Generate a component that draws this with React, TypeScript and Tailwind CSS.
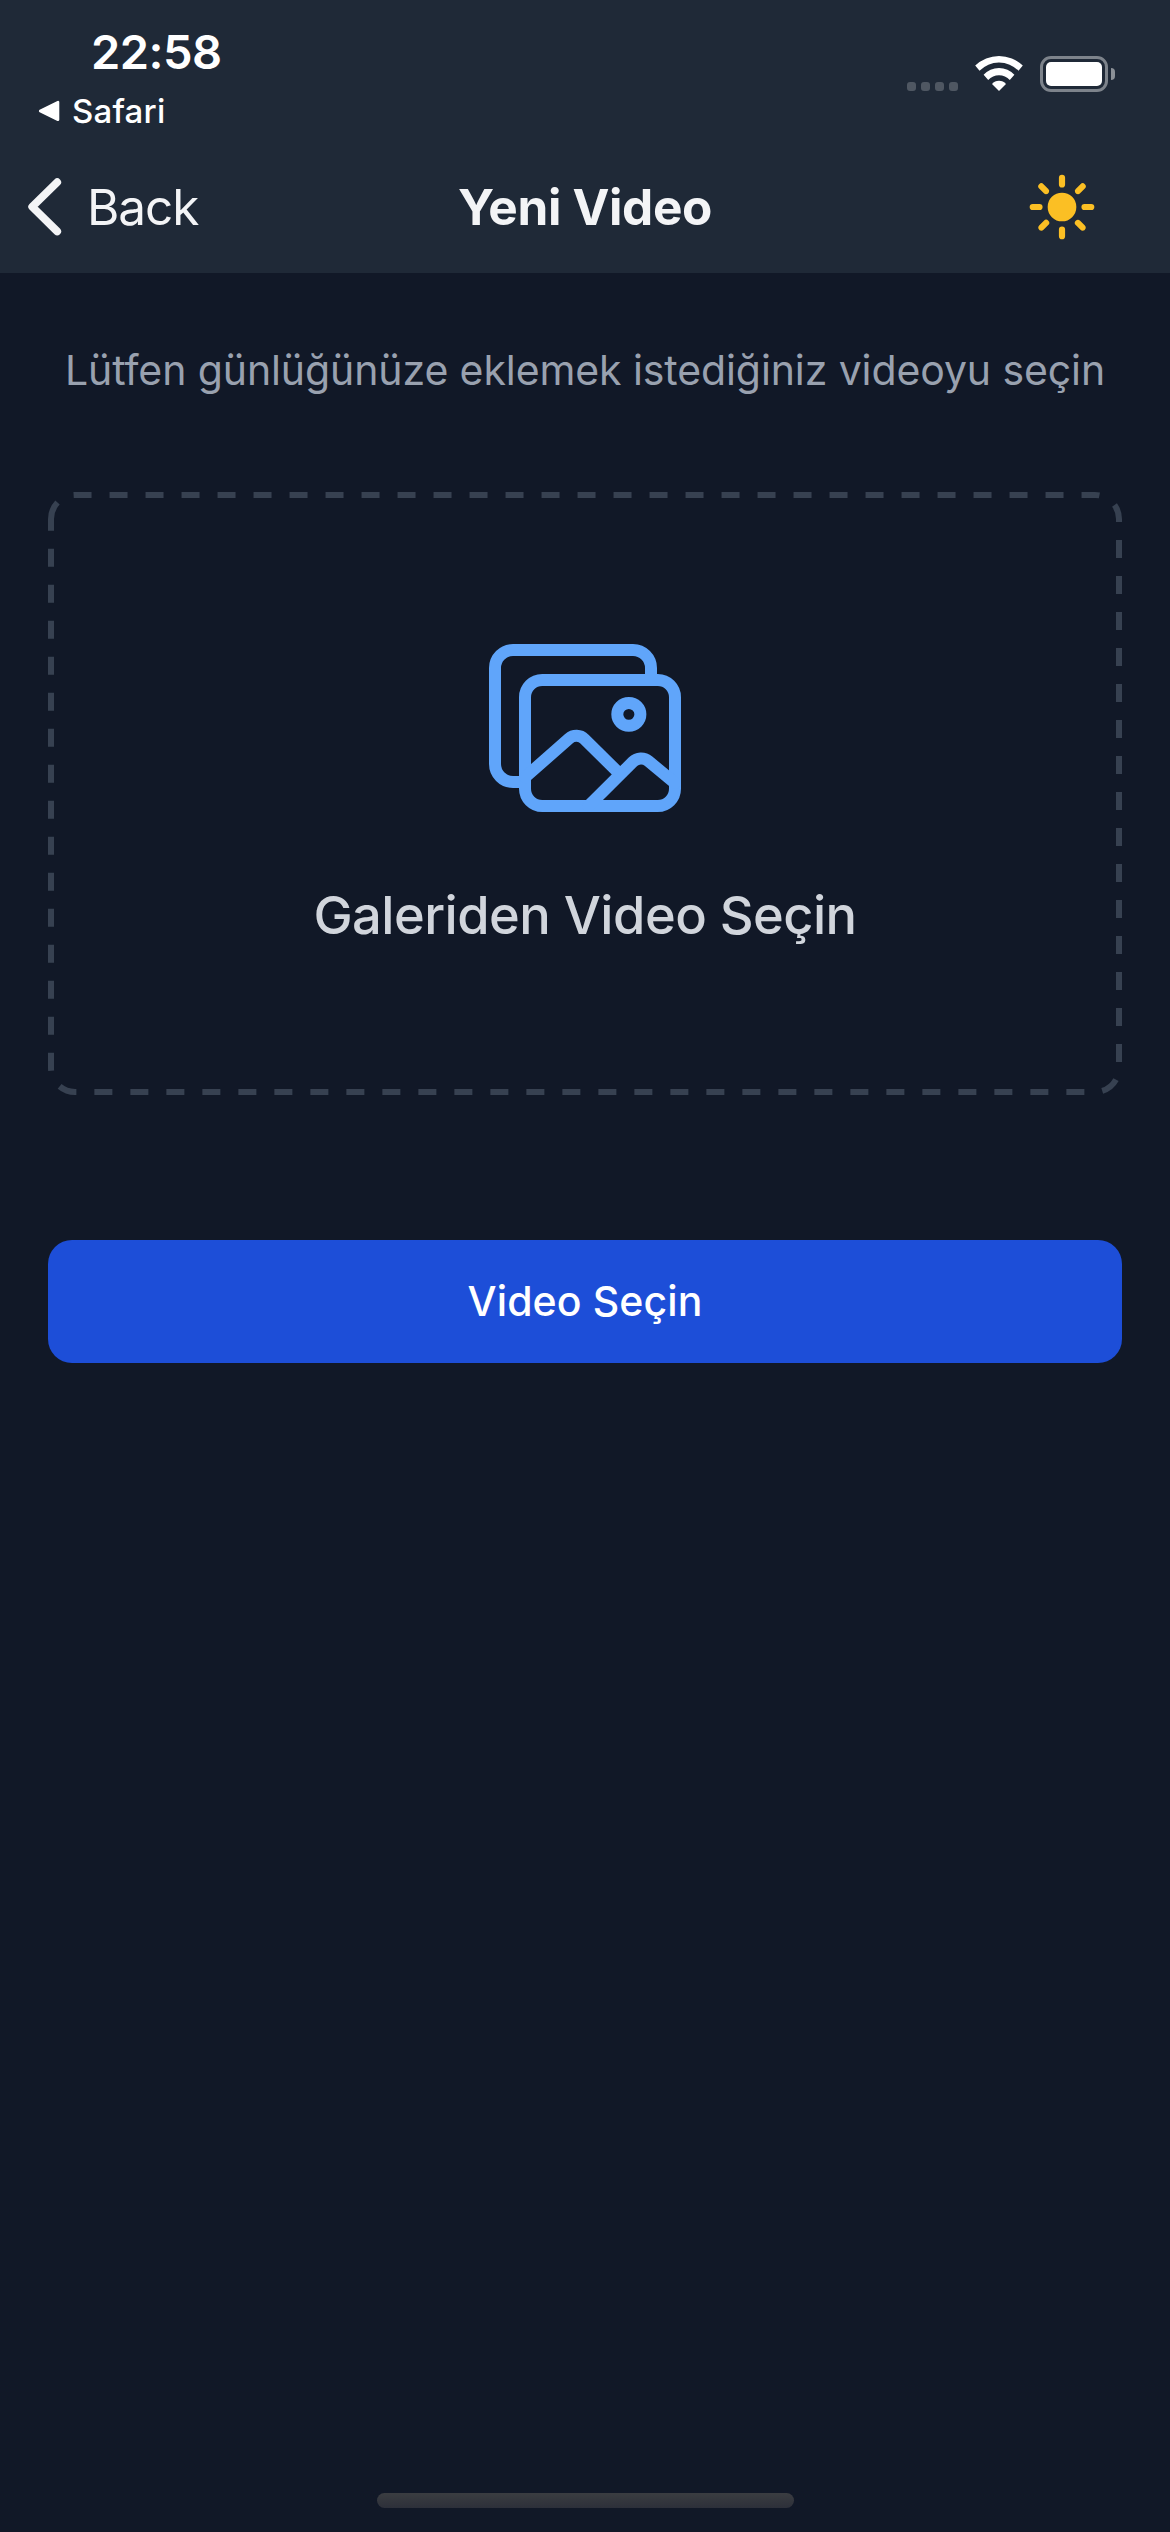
import { IoImagesOutline, IoSunny } from "react-icons/io5";

function SignalDots() {
  return (
    <div className="mt-[27px] flex gap-[5px]">
      {[0, 1, 2, 3].map((i) => (
        <span key={i} className="size-[9px] rounded-[3px] bg-[#4f5762]" />
      ))}
    </div>
  );
}

function Wifi() {
  return (
    <svg width="48" height="36" viewBox="0 0 48 36" fill="#fff" className="ml-[17px] block">
      <path d="M.2 10.6A34 34 0 0 1 47.8 10.6L43.5 15.8A27 27 0 0 0 4.5 15.8Z" />
      <path d="M8.6 19.8A20.6 20.6 0 0 1 39.4 19.8L34.8 25A14.8 14.8 0 0 0 13.2 25Z" />
      <path d="M17 29A9.2 9.2 0 0 1 31 29L24 36Z" />
    </svg>
  );
}

function Battery() {
  return (
    <div className="ml-[17px] mt-px flex items-center">
      <div className="h-9 w-[68px] rounded-[11px] border-[3px] border-[#7d838b] p-[3px]">
        <div className="h-full rounded-[5px] bg-white" />
      </div>
      <div className="ml-[3px] h-3 w-1 rounded-r-full bg-[#8b9097]" />
    </div>
  );
}

function StatusBar() {
  return (
    <div className="flex h-[141px] justify-between">
      <div className="pt-6 text-white">
        <div className="pl-[91px] text-[47px] leading-[56px] font-semibold tracking-[-0.5px]">22:58</div>
        <div className="mt-[11px] flex h-10 items-center pl-[38px] text-[33px] leading-10 font-[450] tracking-[0.2px]">
          <svg width="22" height="22" viewBox="0 0 22 22" className="block">
            <path d="M2.2 11L20 2.2V19.8Z" fill="#fff" stroke="#fff" strokeWidth="2.6" strokeLinejoin="round" />
          </svg>
          <span className="ml-3">Safari</span>
        </div>
      </div>
      <div className="flex items-start pt-[55px] pr-[55px]">
        <SignalDots />
        <Wifi />
        <Battery />
      </div>
    </div>
  );
}

function NavBar() {
  return (
    <div className="grid h-[132px] grid-cols-3 items-center text-[49.5px] leading-[60px] text-gray-100">
      <button className="flex items-center pl-7 tracking-[-1.1px]">
        <svg width="34" height="58" viewBox="0 0 34 58" className="block">
          <path
            d="M29.2 4.2L4.2 28.8L29.2 53.4"
            fill="none"
            stroke="currentColor"
            strokeWidth="7.8"
            strokeLinecap="round"
            strokeLinejoin="round"
          />
        </svg>
        <span className="ml-[25px]">Back</span>
      </button>
      <h1 className="text-center font-bold tracking-[-0.35px] whitespace-nowrap">Yeni Video</h1>
      <button className="justify-self-end pr-[72px]">
        <IoSunny size={72} color="#fbbf24" className="block" />
      </button>
    </div>
  );
}

function DropZone() {
  return (
    <div className="relative mt-[97px] flex h-[603px] flex-col items-center pt-[140px]">
      <svg width="1074" height="603" viewBox="0 0 1074 603" fill="none" className="absolute inset-0">
        <path
          d="M3 27A24 24 0 0 1 27 3H1047A24 24 0 0 1 1071 27V576A24 24 0 0 1 1047 600H27A24 24 0 0 1 3 576V27"
          stroke="#374151"
          strokeWidth="6"
          strokeDasharray="18"
        />
      </svg>
      <IoImagesOutline size={192} color="#60a5fa" className="block" />
      <p className="mt-[60px] text-[52.4px] leading-[62px] font-medium tracking-[-0.53px] text-gray-300">
        Galeriden Video Seçin
      </p>
    </div>
  );
}

export default function App() {
  return (
    <div className="flex h-[2532px] w-[1170px] flex-col overflow-hidden bg-[#111827] font-['Inter',sans-serif]">
      <header className="bg-[#1f2937]">
        <StatusBar />
        <NavBar />
      </header>
      <main className="flex-1 px-12 pt-[72px]">
        <p className="text-center text-[41px] leading-[50px] tracking-[-0.1px] whitespace-nowrap text-gray-400">
          Lütfen günlüğünüze eklemek istediğiniz videoyu seçin
        </p>
        <DropZone />
        <button className="mt-[145px] h-[123px] w-full rounded-3xl bg-[#1d4ed8] pb-px text-[41px] leading-[50px] font-medium tracking-[0.1px] text-white">
          Video Seçin
        </button>
      </main>
      <div className="mb-6 h-[15px] w-[417px] self-center rounded-full bg-linear-to-b from-[#3b3d41] to-[#2d303a]" />
    </div>
  );
}
